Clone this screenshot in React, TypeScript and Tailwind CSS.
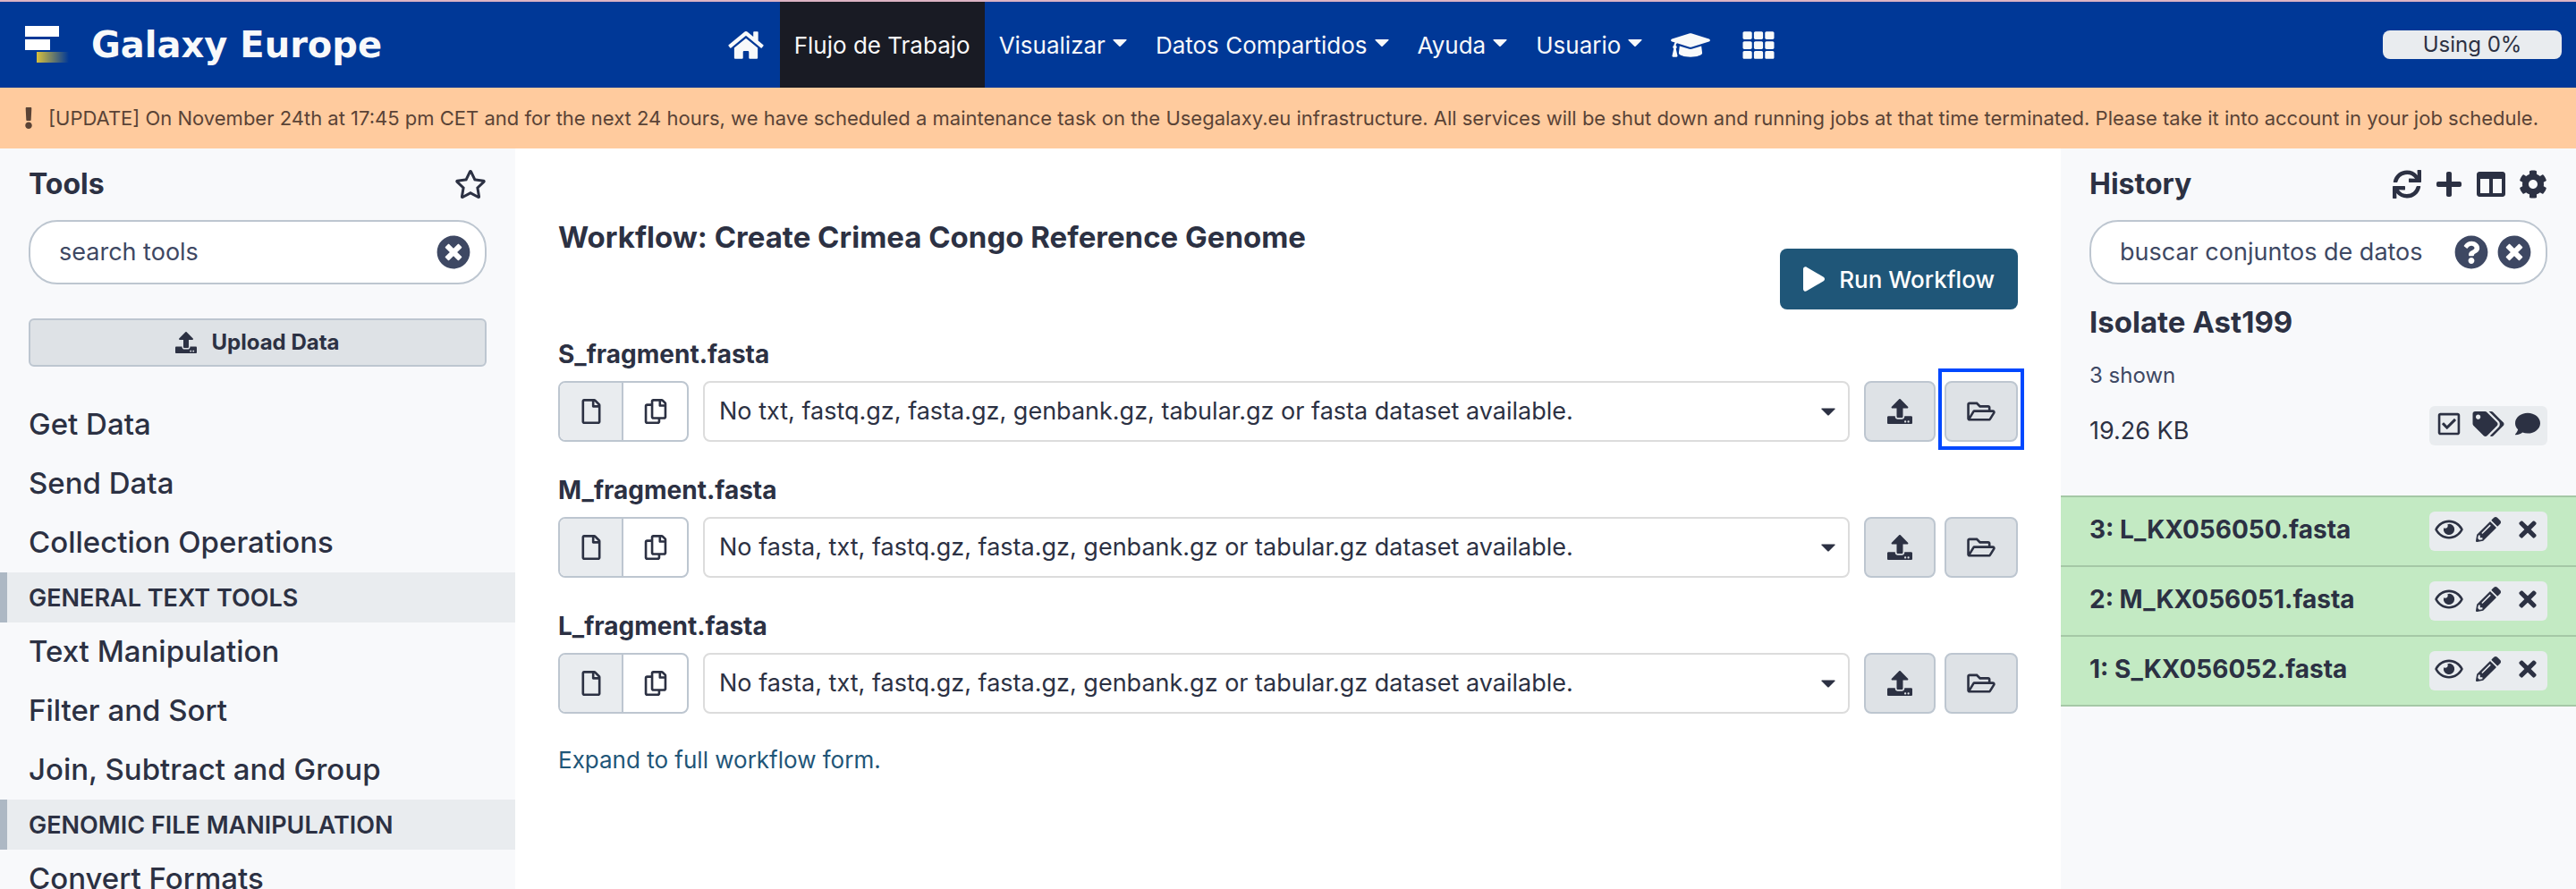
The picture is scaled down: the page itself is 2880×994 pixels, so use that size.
import { FaHome, FaGraduationCap, FaTh, FaExclamation, FaRegStar, FaTimesCircle, FaQuestionCircle, FaUpload, FaPlay, FaRegFile, FaRegCopy, FaRegFolderOpen, FaSync, FaPlus, FaColumns, FaCog, FaRegCheckSquare, FaTags, FaComment, FaRegEye, FaPencilAlt, FaTimes } from "react-icons/fa";

const menus = ["Visualizar", "Datos Compartidos", "Ayuda", "Usuario"];

const toolGroups = [
  { heading: "", tools: ["Get Data", "Send Data", "Collection Operations"] },
  { heading: "General Text Tools", tools: ["Text Manipulation", "Filter and Sort", "Join, Subtract and Group"] },
  { heading: "Genomic File Manipulation", tools: ["Convert Formats"] },
];

const inputs = [
  { name: "S_fragment.fasta", message: "No txt, fastq.gz, fasta.gz, genbank.gz, tabular.gz or fasta dataset available.", marked: true },
  { name: "M_fragment.fasta", message: "No fasta, txt, fastq.gz, fasta.gz, genbank.gz or tabular.gz dataset available.", marked: false },
  { name: "L_fragment.fasta", message: "No fasta, txt, fastq.gz, fasta.gz, genbank.gz or tabular.gz dataset available.", marked: false },
];

const datasets = ["3: L_KX056050.fasta", "2: M_KX056051.fasta", "1: S_KX056052.fasta"];

function Caret({ className }: { className: string }) {
  return (
    <svg viewBox="0 0 16 8" className={className} fill="currentColor" aria-hidden="true">
      <path d="M1 0h14q1 0 .5 1L9 7.500q-1 1-2 0L.5 1Q0 0 1 0z" />
    </svg>
  );
}

function Logo() {
  return (
    <svg viewBox="0 0 50 42" className="h-[42px] w-[50px]" aria-hidden="true">
      <defs>
        <linearGradient id="tail" x1="0" x2="1">
          <stop offset="0" stopColor="#d8c03c" />
          <stop offset="1" stopColor="#d8c03c" stopOpacity="0" />
        </linearGradient>
      </defs>
      <rect x="0" y="0" width="38" height="12" fill="#fff" />
      <rect x="0" y="15" width="28" height="12" fill="#fff" />
      <rect x="13" y="29" width="36" height="12" fill="url(#tail)" />
    </svg>
  );
}

function Masthead() {
  return (
    <header className="grid h-[98px] grid-cols-[1fr_auto_1fr] border-t-2 border-[#dcb3c4] bg-[#003897] text-[#f8f9fa]">
      <a href="#home" className="flex items-center gap-6 pl-7 font-['DejaVu_Sans'] text-[40px] font-bold">
        <Logo />
        Galaxy Europe
      </a>
      <nav className="flex pr-20 text-[26px]">
        <a href="#start" aria-label="Home" className="flex items-center px-4">
          <FaHome className="h-[35px] w-11" />
        </a>
        <a href="#workflow" className="flex items-center bg-[#191b24] px-4">Flujo de Trabajo</a>
        {menus.map((m) => (
          <button key={m} type="button" className="flex items-center gap-2 px-4">
            {m}
            <Caret className="mb-1 h-2 w-4" />
          </button>
        ))}
        <a href="#training" aria-label="Training" className="flex items-center px-4">
          <FaGraduationCap className="h-[35px] w-11" />
        </a>
        <button type="button" aria-label="Apps" className="flex items-center px-4">
          <FaTh className="h-[35px] w-11" />
        </button>
      </nav>
      <div className="flex items-center justify-end pr-4">
        <div className="h-8 w-[200px] rounded-lg bg-[#e9ecef] text-center text-[24px] leading-8 text-[#2c3143]">Using 0%</div>
      </div>
    </header>
  );
}

function ToolPanel() {
  return (
    <aside className="w-1/5 shrink-0 bg-[#f8f9fb]">
      <div className="flex flex-col px-8 pt-5">
        <div className="flex h-10 items-center justify-between">
          <h2 className="text-[32px] font-bold">Tools</h2>
          <button type="button" aria-label="Favorites"><FaRegStar className="h-8 w-9" /></button>
        </div>
        <div className="mt-5 flex h-[72px] items-center rounded-[32px] border-2 border-[#bdc6d0] bg-white pr-4 pl-8">
          <input aria-label="search tools" placeholder="search tools" className="min-w-0 flex-1 text-[27px] outline-none placeholder:text-[#3e4863]" />
          <button type="button" aria-label="Clear search" className="text-[#3e4863]"><FaTimesCircle className="size-[38px]" /></button>
        </div>
        <button type="button" className="mt-[38px] flex h-[54px] items-center justify-center gap-4 rounded-md border-2 border-[#bdc6d0] bg-[#dee2e6] text-[24px] font-bold">
          <FaUpload className="size-6" />
          Upload Data
        </button>
      </div>
      <div className="mt-8">
        {toolGroups.map((g) => (
          <section key={g.heading}>
            {g.heading && <h3 className="h-14 border-l-8 border-[#adb8c4] bg-[#e9ecef] pl-6 text-[27px] leading-[58px] font-semibold uppercase">{g.heading}</h3>}
            {g.tools.map((t) => (
              <a key={t} href="#tool" className="block h-[66px] pl-8 text-[33px] leading-[64px] font-medium">{t}</a>
            ))}
          </section>
        ))}
      </div>
    </aside>
  );
}

function WorkflowForm() {
  return (
    <main className="min-w-0 flex-1 px-12 pt-20">
      <h1 className="h-8 text-[33px] leading-[38px] font-bold">Workflow: Create Crimea Congo Reference Genome</h1>
      <div className="flex justify-end">
        <button type="button" className="flex h-[68px] items-center gap-4 rounded-lg bg-[#1f5678] px-[26px] text-[26px] font-medium text-white">
          <FaPlay className="h-7 w-6" />
          Run Workflow
        </button>
      </div>
      <form className="mt-[30px] flex flex-col gap-[34px]">
        {inputs.map((f) => (
          <div key={f.name} className="flex flex-col gap-2.5">
            <label htmlFor={f.name} className="text-[28px] leading-10 font-bold">{f.name}</label>
            <div className="flex h-[68px] items-stretch">
              <div className="flex overflow-hidden rounded-lg border-2 border-[#bdc6d0]">
                <button type="button" aria-label="Single dataset" className="flex w-[71px] items-center justify-center border-r-2 border-[#bdc6d0] bg-[#e9ecef]"><FaRegFile className="h-7 w-[22px]" /></button>
                <button type="button" aria-label="Multiple datasets" className="flex w-[71px] items-center justify-center"><FaRegCopy className="h-7 w-[26px]" /></button>
              </div>
              <div className="relative ml-4 flex-1">
                <select id={f.name} className="size-full appearance-none rounded-lg border-2 border-[#dcdcdc] bg-white px-4 text-[27px]">
                  <option>{f.message}</option>
                </select>
                <Caret className="pointer-events-none absolute top-[30px] right-4 h-[9px] w-4" />
              </div>
              <button type="button" aria-label="Upload dataset" className="ml-4 flex w-20 items-center justify-center rounded-lg border-2 border-[#bdc6d0] bg-[#dee2e6]"><FaUpload className="size-7" /></button>
              <div className="relative ml-[10px] flex">
                <button type="button" aria-label="Browse datasets" className="flex w-[82px] items-center justify-center rounded-lg border-2 border-[#bdc6d0] bg-[#dee2e6]"><FaRegFolderOpen className="h-7 w-8" /></button>
                {f.marked && <div className="pointer-events-none absolute -top-[14px] -right-[7px] -bottom-[9px] -left-[7px] border-4 border-[#0048ff]" />}
              </div>
            </div>
          </div>
        ))}
      </form>
      <a href="#expand" className="mt-8 inline-block text-[26px] leading-10 text-[#1f5678]">Expand to full workflow form.</a>
    </main>
  );
}

function HistoryPanel() {
  return (
    <aside className="w-1/5 shrink-0 bg-[#f8f9fb]">
      <div className="flex flex-col px-8 pt-5">
        <div className="flex h-10 items-center justify-between">
          <h2 className="text-[32px] font-bold">History</h2>
          <div className="flex gap-[15px]">
            <button type="button" aria-label="Refresh"><FaSync className="size-8" /></button>
            <button type="button" aria-label="New history"><FaPlus className="size-8" /></button>
            <button type="button" aria-label="Show side by side"><FaColumns className="size-8" /></button>
            <button type="button" aria-label="History options"><FaCog className="size-8" /></button>
          </div>
        </div>
        <div className="mt-5 flex h-[72px] items-center gap-2.5 rounded-[32px] border-2 border-[#bdc6d0] bg-white pr-4 pl-8 text-[#3e4863]">
          <input aria-label="buscar conjuntos de datos" placeholder="buscar conjuntos de datos" className="min-w-0 flex-1 text-[27px] outline-none placeholder:text-[#3e4863]" />
          <button type="button" aria-label="Search help"><FaQuestionCircle className="size-[38px]" /></button>
          <button type="button" aria-label="Clear search"><FaTimesCircle className="size-[38px]" /></button>
        </div>
        <h3 className="mt-6 text-[33px] leading-9 font-bold">Isolate Ast199</h3>
        <p className="mt-6 text-[24px] leading-9 text-[#3e4863]">3 shown</p>
        <div className="mt-4 mb-14 flex h-11 justify-between">
          <p className="pt-2 text-[27px] leading-10">19.26 KB</p>
          <div className="flex h-11 rounded-md bg-[#e9ecef] pb-1">
            <button type="button" aria-label="Select items" className="flex w-11 items-center justify-center"><FaRegCheckSquare className="size-7" /></button>
            <button type="button" aria-label="Tags" className="flex w-11 items-center justify-center"><FaTags className="h-7 w-9" /></button>
            <button type="button" aria-label="Annotation" className="flex w-11 items-center justify-center"><FaComment className="size-7" /></button>
          </div>
        </div>
      </div>
      <ul className="border-b-2 border-[#a5c8a6]">
        {datasets.map((d) => (
          <li key={d} className="flex h-[78px] items-center justify-between border-t-2 border-[#a5c8a6] bg-[#c3eac3] px-8">
            <span className="pb-1 text-[28px] font-bold">{d}</span>
            <div className="flex h-11 rounded-md bg-[#e9ecef] pb-1">
              <button type="button" aria-label="View" className="flex w-11 items-center justify-center"><FaRegEye className="h-7 w-8" /></button>
              <button type="button" aria-label="Edit" className="flex w-11 items-center justify-center"><FaPencilAlt className="size-7" /></button>
              <button type="button" aria-label="Delete" className="flex w-11 items-center justify-center"><FaTimes className="size-7" /></button>
            </div>
          </li>
        ))}
      </ul>
    </aside>
  );
}

export default function App() {
  return (
    <div className="flex h-screen flex-col overflow-hidden bg-white font-[Inter,sans-serif] text-[#2c3143]">
      <Masthead />
      <div className="flex h-[68px] shrink-0 items-center gap-3.5 bg-[#ffcb9e] px-6 text-[22px] whitespace-nowrap text-[#5a4336]">
        <FaExclamation className="h-6 w-4 shrink-0" />
        <p>[UPDATE] On November 24th at 17:45 pm CET and for the next 24 hours, we have scheduled a maintenance task on the Usegalaxy.eu infrastructure. All services will be shut down and running jobs at that time terminated. Please take it into account in your job schedule.</p>
      </div>
      <div className="flex min-h-0 flex-1">
        <ToolPanel />
        <WorkflowForm />
        <HistoryPanel />
      </div>
    </div>
  );
}
